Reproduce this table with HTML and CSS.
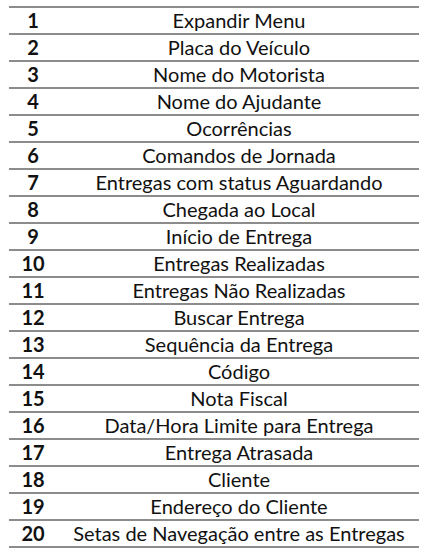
FILE: index.html
```html
<!DOCTYPE html>
<html lang="pt">
<head>
<meta charset="utf-8">
<link rel="stylesheet" href="styles.css">
</head>
<body>
<div class="legend">
  <div class="row"><span class="num">1</span><span class="label">Expandir Menu</span></div>
  <div class="row"><span class="num">2</span><span class="label">Placa do Veículo</span></div>
  <div class="row"><span class="num">3</span><span class="label">Nome do Motorista</span></div>
  <div class="row"><span class="num">4</span><span class="label">Nome do Ajudante</span></div>
  <div class="row"><span class="num">5</span><span class="label">Ocorrências</span></div>
  <div class="row"><span class="num">6</span><span class="label">Comandos de Jornada</span></div>
  <div class="row"><span class="num">7</span><span class="label">Entregas com status Aguardando</span></div>
  <div class="row"><span class="num">8</span><span class="label">Chegada ao Local</span></div>
  <div class="row"><span class="num">9</span><span class="label">Início de Entrega</span></div>
  <div class="row"><span class="num">10</span><span class="label">Entregas Realizadas</span></div>
  <div class="row"><span class="num">11</span><span class="label">Entregas Não Realizadas</span></div>
  <div class="row"><span class="num">12</span><span class="label">Buscar Entrega</span></div>
  <div class="row"><span class="num">13</span><span class="label">Sequência da Entrega</span></div>
  <div class="row"><span class="num">14</span><span class="label">Código</span></div>
  <div class="row"><span class="num">15</span><span class="label">Nota Fiscal</span></div>
  <div class="row"><span class="num">16</span><span class="label">Data/Hora Limite para Entrega</span></div>
  <div class="row"><span class="num">17</span><span class="label">Entrega Atrasada</span></div>
  <div class="row"><span class="num">18</span><span class="label">Cliente</span></div>
  <div class="row"><span class="num">19</span><span class="label">Endereço do Cliente</span></div>
  <div class="row"><span class="num">20</span><span class="label">Setas de Navegação entre as Entregas</span></div>
</div>
</body>
</html>
```
FILE: styles.css
```css
html, body {
  margin: 0;
  padding: 0;
  background: #ffffff;
}
body {
  font-family: Lato, "Open Sans", sans-serif;
  color: #111111;
}
.legend {
  margin: 6px 0 0 9px;
  width: 410px;
  border-top: 2px solid #8c8c8c;
}
.row {
  display: grid;
  grid-template-columns: 48px 1fr;
  align-items: center;
  height: 25px;
  border-bottom: 2px solid #8c8c8c;
  font-size: 20px;
  line-height: 25px;
}
.num {
  text-align: center;
  font-weight: 700;
}
.label {
  text-align: center;
  padding-left: 2px;
}
```
